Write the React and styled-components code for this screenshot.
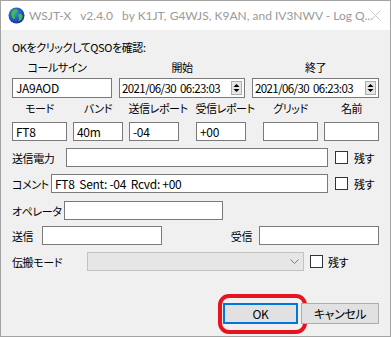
import React from "react";
import styled, { createGlobalStyle } from "styled-components";

const GlobalStyle = createGlobalStyle`
  html, body {
    margin: 0;
    padding: 0;
    background: #fff;
  }
  body {
    font-family: "Noto Sans CJK JP", "Noto Sans", sans-serif;
  }
`;

const Window = styled.div`
  width: 391px;
  height: 337px;
  box-sizing: border-box;
  border: 1px solid #a3a3a3;
  display: flex;
  flex-direction: column;
  background: #f0f0f0;
  overflow: hidden;
`;

const TitleBar = styled.div`
  height: 29px;
  flex: none;
  background: #fff;
  display: flex;
  align-items: center;
  padding-left: 7px;
  position: relative;
`;

const TitleText = styled.div`
  margin-left: 4px;
  font-family: "Lato", "Noto Sans", sans-serif;
  font-size: 12px;
  color: #9a9a9a;
  white-space: pre;
`;

const CloseX = styled.svg`
  position: absolute;
  right: 9px;
  top: 9px;
`;

const Body = styled.div`
  flex: 1;
  padding: 9px 11px 0 11px;
  font-size: 11px;
  letter-spacing: -0.4px;
  line-height: 16px;
  color: #000;
  font-feature-settings: "palt";
  display: flex;
  flex-direction: column;
`;

const Prompt = styled.div`
  height: 16px;
`;

const FieldRow = styled.div`
  display: flex;
  margin-top: ${(p) => p.$mt}px;
`;

const Field = styled.div`
  display: flex;
  flex-direction: column;
  align-items: center;
  width: ${(p) => p.$w}px;
  margin-left: ${(p) => p.$ml || 0}px;
  gap: ${(p) => p.$gap}px;
`;

const FieldLabel = styled.div`
  height: 16px;
  white-space: nowrap;
  transform: translateX(${(p) => p.$dx || 0}px);
`;

const TextBox = styled.div`
  box-sizing: border-box;
  width: ${(p) => (p.$w ? `${p.$w}px` : "100%")};
  height: ${(p) => p.$h || 19}px;
  border: 1px solid #7a7a7a;
  background: #fff;
  padding-left: 3px;
  font-size: 12px;
  line-height: ${(p) => (p.$h || 19) - 2}px;
  letter-spacing: -0.3px;
  white-space: pre;
  flex: none;
`;

const DateBox = styled.div`
  box-sizing: border-box;
  width: 100%;
  height: 20px;
  border: 1px solid #7a7a7a;
  background: #fff;
  display: flex;
  align-items: center;
  padding: 0 2px 0 2px;
  font-size: 11.5px;
`;

const DatePart = styled.span`
  letter-spacing: -0.6px;
  white-space: nowrap;
  margin-left: ${(p) => p.$ml || 0}px;
`;

const Spinner = styled.div`
  margin-left: auto;
  width: 11px;
  height: 14px;
  flex: none;
  box-sizing: border-box;
  border: 1px solid #adadad;
  background: #e5e5e5;
  display: flex;
  align-items: center;
  justify-content: center;
`;

const LineRow = styled.div`
  display: flex;
  align-items: center;
  height: 19px;
  margin-top: ${(p) => p.$mt}px;
`;

const RowLabel = styled.div`
  width: ${(p) => (p.$w ? `${p.$w}px` : "auto")};
  flex: none;
  white-space: nowrap;
`;

const Spacer = styled.div`
  flex: 1;
`;

const CheckBox = styled.div`
  width: 13px;
  height: 13px;
  box-sizing: border-box;
  border: 1px solid #333;
  background: #fff;
  margin-left: ${(p) => p.$ml}px;
  flex: none;
`;

const CheckText = styled.span`
  margin-left: ${(p) => p.$ml}px;
`;

const Combo = styled.div`
  box-sizing: border-box;
  width: 217px;
  height: 19px;
  border: 1px solid #c2c2c2;
  background: #e6e6e6;
  display: flex;
  align-items: center;
  justify-content: flex-end;
  padding-right: 4px;
`;

const ButtonRow = styled.div`
  display: flex;
  justify-content: flex-end;
  gap: 3px;
  margin-top: 32px;
`;

const Button = styled.div`
  position: relative;
  box-sizing: border-box;
  width: ${(p) => p.$w}px;
  height: 21px;
  background: #e1e1e1;
  border: ${(p) => (p.$primary ? "2px solid #0078d7" : "1px solid #adadad")};
  display: flex;
  align-items: center;
  justify-content: center;
  font-size: 12px;
`;

const Highlight = styled.div`
  position: absolute;
  left: -7px;
  top: -11px;
  width: 89px;
  height: 40px;
  box-sizing: border-box;
  border: 4px solid #e5141f;
  border-radius: 11px;
  pointer-events: none;
`;

const Globe = () => (
  <svg width="17" height="17" viewBox="0 0 17 17">
    <defs>
      <radialGradient id="g" cx="0.4" cy="0.35" r="0.7">
        <stop offset="0" stopColor="#4b8ef0" />
        <stop offset="1" stopColor="#0d2f9a" />
      </radialGradient>
    </defs>
    <circle cx="8.5" cy="8.5" r="8" fill="url(#g)" />
    <path d="M6 2.5 C8 2 10 3 9.5 4.5 C9 6 7 5.5 6.5 7 C6 8.5 7.5 9.5 7 11 C6.5 12.5 5 12 4.5 10.5 C4 9 3 8 3.5 6 C4 4 5 3 6 2.5Z" fill="#3cc23c" />
    <path d="M11 7 C12.5 6.5 14.5 7.5 14.5 9.5 C14.5 11.5 13 13.5 11.5 14 C10.5 14.3 10.5 12.5 11 11.5 C11.5 10.5 10 9.5 10.3 8.5 C10.5 7.7 10.6 7.2 11 7Z" fill="#3cc23c" />
  </svg>
);

const SpinIcon = () => (
  <svg width="7" height="10" viewBox="0 0 7 10">
    <path d="M3.5 1 L6.5 4 L0.5 4 Z" fill="#000" />
    <path d="M3.5 9 L6.5 6 L0.5 6 Z" fill="#000" />
  </svg>
);

const DateField = ({ date, time }) => (
  <DateBox>
    <DatePart>{date}</DatePart>
    <DatePart $ml={4}>{time}</DatePart>
    <Spinner>
      <SpinIcon />
    </Spinner>
  </DateBox>
);

export default function App() {
  return (
    <>
      <GlobalStyle />
      <Window>
        <TitleBar>
          <Globe />
          <TitleText>{"WSJT-X   v2.4.0   by K1JT, G4WJS, K9AN, and IV3NWV - Log Q..."}</TitleText>
          <CloseX width="11" height="11" viewBox="0 0 11 11">
            <path d="M0.5 0.5 L10.5 10.5 M10.5 0.5 L0.5 10.5" stroke="#c8c8c8" strokeWidth="1" />
          </CloseX>
        </TitleBar>
        <Body>
          <Prompt>OKをクリックしてQSOを確認:</Prompt>

          <FieldRow $mt={4}>
            <Field $w={100} $gap={3}>
              <FieldLabel $dx={-5}>コールサイン</FieldLabel>
              <TextBox $h={20}>JA9AOD</TextBox>
            </Field>
            <Field $w={126} $ml={7} $gap={3}>
              <FieldLabel>開始</FieldLabel>
              <DateField date="2021/06/30" time="06:23:03" />
            </Field>
            <Field $w={127} $ml={7} $gap={3}>
              <FieldLabel>終了</FieldLabel>
              <DateField date="2021/06/30" time="06:23:03" />
            </Field>
          </FieldRow>

          <FieldRow $mt={2}>
            <Field $w={55} $gap={6}>
              <FieldLabel>モード</FieldLabel>
              <TextBox>FT8</TextBox>
            </Field>
            <Field $w={50} $ml={6} $gap={6}>
              <FieldLabel>バンド</FieldLabel>
              <TextBox>40m</TextBox>
            </Field>
            <Field $w={50} $ml={6} $gap={6}>
              <FieldLabel $dx={4}>送信レポート</FieldLabel>
              <TextBox>-04</TextBox>
            </Field>
            <Field $w={50} $ml={17} $gap={6}>
              <FieldLabel $dx={4}>受信レポート</FieldLabel>
              <TextBox>+00</TextBox>
            </Field>
            <Field $w={55} $ml={17} $gap={6}>
              <FieldLabel>グリッド</FieldLabel>
              <TextBox />
            </Field>
            <Field $w={55} $ml={6} $gap={6}>
              <FieldLabel>名前</FieldLabel>
              <TextBox />
            </Field>
          </FieldRow>

          <LineRow $mt={7}>
            <RowLabel $w={54}>送信電力</RowLabel>
            <TextBox $w={262} />
            <CheckBox $ml={7} />
            <CheckText $ml={6}>残す</CheckText>
          </LineRow>

          <LineRow $mt={7}>
            <RowLabel $w={39}>コメント</RowLabel>
            <TextBox $w={277}>{"FT8  Sent: -04  Rcvd: +00"}</TextBox>
            <CheckBox $ml={7} />
            <CheckText $ml={6}>残す</CheckText>
          </LineRow>

          <LineRow $mt={8}>
            <RowLabel $w={52}>オペレータ</RowLabel>
            <TextBox $w={159} />
          </LineRow>

          <LineRow $mt={6}>
            <RowLabel $w={30}>送信</RowLabel>
            <TextBox $w={120} />
            <Spacer />
            <RowLabel>受信</RowLabel>
            <TextBox $w={120} style={{ marginLeft: 7 }} />
          </LineRow>

          <LineRow $mt={7}>
            <RowLabel $w={75}>伝搬モード</RowLabel>
            <Combo>
              <svg width="9" height="5" viewBox="0 0 9 5">
                <path d="M0.5 0.5 L4.5 4.5 L8.5 0.5" fill="none" stroke="#7a7a7a" strokeWidth="1" />
              </svg>
            </Combo>
            <CheckBox $ml={6} />
            <CheckText $ml={5}>残す</CheckText>
          </LineRow>

          <ButtonRow>
            <Button $w={75} $primary>
              OK
              <Highlight />
            </Button>
            <Button $w={78}>キャンセル</Button>
          </ButtonRow>
        </Body>
      </Window>
    </>
  );
}
